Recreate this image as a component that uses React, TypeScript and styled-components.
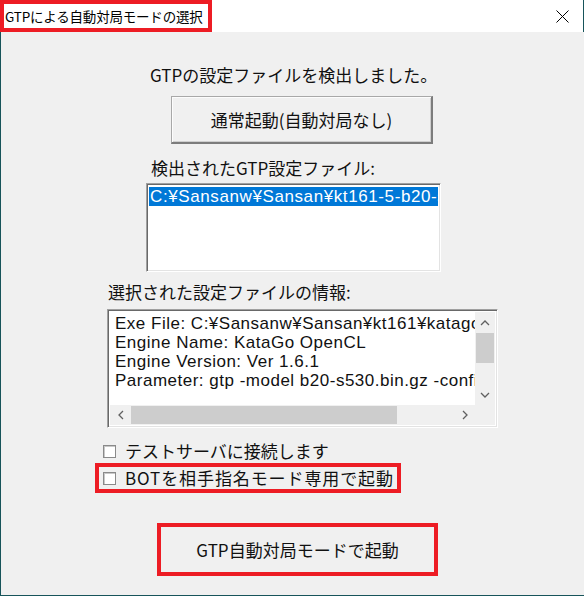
import React from "react";
import styled, { createGlobalStyle } from "styled-components";

const Global = createGlobalStyle`
  html, body { margin: 0; padding: 0; background: #f0f0f0; }
  * { box-sizing: border-box; }
`;

const JP = `"Noto Sans CJK JP", "Liberation Sans", sans-serif`;
const LAT = `"Liberation Sans", "Noto Sans CJK JP", sans-serif`;
const RED = "#ed1c24";
const TEAL = "#17545a";

const Window = styled.div`
  width: 584px;
  height: 596px;
  display: flex;
  flex-direction: column;
  border-left: 1px solid ${TEAL};
  border-bottom: 1px solid ${TEAL};
  background: #f0f0f0;
  font-family: ${JP};
  color: #000;
`;

const TitleBar = styled.div`
  height: 32px;
  flex: none;
  display: flex;
  align-items: stretch;
  justify-content: space-between;
  background: #fff;
  border-right: 1px solid ${TEAL};
  margin-left: -1px;
`;

const Highlight = styled.div<{ $w: number; $h: number }>`
  width: ${(p) => p.$w}px;
  height: ${(p) => p.$h}px;
  border: 4px solid ${RED};
  display: flex;
  align-items: center;
`;

const TitleText = styled.span`
  font-size: 13.5px;
  padding-left: 1px;
  white-space: nowrap;
  letter-spacing: -0.2px;
`;

const CloseBox = styled.div`
  width: 28px;
  display: flex;
  align-items: center;
  justify-content: center;
  margin-right: 7px;
`;

const Body = styled.div`
  flex: 1;
  display: flex;
  flex-direction: column;
  align-items: flex-start;
`;

const Label = styled.div<{ $mt: number; $ml: number }>`
  margin-top: ${(p) => p.$mt}px;
  margin-left: ${(p) => p.$ml}px;
  font-size: 17px;
  line-height: 20px;
  height: 20px;
  white-space: nowrap;
  color: #111;
`;

const Button = styled.div<{ $w: number; $h: number; $flat?: boolean }>`
  width: ${(p) => p.$w}px;
  height: ${(p) => p.$h}px;
  display: flex;
  align-items: center;
  justify-content: center;
  background: #f0f0f0;
  border-top: ${(p) => (p.$flat ? "none" : "1px solid #a8a8a8")};
  border-left: ${(p) => (p.$flat ? "none" : "1px solid #a8a8a8")};
  border-right: ${(p) => (p.$flat ? "none" : "2px solid #7c7c7c")};
  border-bottom: ${(p) => (p.$flat ? "none" : "2px solid #7c7c7c")};
  box-shadow: ${(p) => (p.$flat ? "none" : "inset 1px 1px 0 #fcfcfc, inset -1px -1px 0 #cfcfcf")};
  font-size: 17px;
  color: #111;
  white-space: nowrap;
`;

const Place = styled.div<{ $mt: number; $ml: number }>`
  margin-top: ${(p) => p.$mt}px;
  margin-left: ${(p) => p.$ml}px;
`;

const Sunken = styled.div<{ $w: number; $h: number }>`
  width: ${(p) => p.$w}px;
  height: ${(p) => p.$h}px;
  background: #fff;
  border-top: 1px solid #a0a0a0;
  border-left: 1px solid #a0a0a0;
  border-right: 1px solid #fff;
  border-bottom: 1px solid #fff;
  box-shadow: inset 1px 1px 0 #696969, inset -1px -1px 0 #e3e3e3;
  padding: 2px;
  overflow: hidden;
`;

const SelectedRow = styled.div`
  height: 19px;
  margin-top: 1px;
  background: #0078d7;
  color: #fff;
  font-family: ${LAT};
  font-size: 17px;
  letter-spacing: 0.6px;
  line-height: 19px;
  white-space: nowrap;
  overflow: hidden;
  padding-left: 1px;
`;

const InfoGrid = styled.div`
  display: grid;
  grid-template-columns: 1fr 20px;
  grid-template-rows: 1fr 20px;
  height: 100%;
`;

const InfoText = styled.div`
  padding: 2px 5px;
  font-family: ${LAT};
  font-size: 17px;
  letter-spacing: 0.5px;
  line-height: 19px;
  white-space: nowrap;
  overflow: hidden;
  color: #111;
`;

const VBar = styled.div`
  background: #f0f0f0;
  display: grid;
  grid-template-rows: 21px 30px 1fr 21px;
`;

const HBar = styled.div`
  background: #f0f0f0;
  display: grid;
  grid-template-columns: 21px 266px 1fr 21px;
`;

const Corner = styled.div`
  background: #f0f0f0;
`;

const Arrow = styled.div`
  display: flex;
  align-items: center;
  justify-content: center;
`;

const Thumb = styled.div<{ $v?: boolean }>`
  background: #cdcdcd;
  margin: ${(p) => (p.$v ? "0 1px 0 1px" : "1px 0 1px 0")};
`;

const CheckRow = styled.div<{ $ls?: number }>`
  display: flex;
  align-items: center;
  gap: 9px;
  font-size: 17px;
  line-height: 20px;
  letter-spacing: ${(p) => p.$ls ?? 0}px;
  color: #111;
  white-space: nowrap;
`;

const Box = styled.span`
  width: 13px;
  height: 13px;
  flex: none;
  background: #fff;
  border: 1px solid #8a8a8a;
  box-shadow: inset 1px 1px 0 #c8c8c8;
`;

const Chevron = ({ d }: { d: string }) => (
  <svg width="10" height="10" viewBox="0 0 10 10">
    <path d={d} fill="none" stroke="#606060" strokeWidth="1.3" />
  </svg>
);

export default function App() {
  return (
    <>
      <Global />
      <Window>
        <TitleBar>
          <Highlight $w={212} $h={32}>
            <TitleText>GTPによる自動対局モードの選択</TitleText>
          </Highlight>
          <CloseBox>
            <svg width="13" height="13" viewBox="0 0 13 13">
              <path d="M0.5 0.5 L12.5 12.5 M12.5 0.5 L0.5 12.5" stroke="#000" strokeWidth="1" />
            </svg>
          </CloseBox>
        </TitleBar>
        <Body>
          <Label $mt={33} $ml={149}>GTPの設定ファイルを検出しました。</Label>
          <Place $mt={11} $ml={170}>
            <Button $w={262} $h={48}>通常起動(自動対局なし)</Button>
          </Place>
          <Label $mt={14} $ml={150}>検出されたGTP設定ファイル:</Label>
          <Place $mt={5} $ml={145}>
            <Sunken $w={295} $h={89}>
              <SelectedRow>C:¥Sansanw¥Sansan¥kt161-5-b20-s530-gtp.cfg</SelectedRow>
            </Sunken>
          </Place>
          <Label $mt={10} $ml={107}>選択された設定ファイルの情報:</Label>
          <Place $mt={7} $ml={106}>
            <Sunken $w={391} $h={119}>
              <InfoGrid>
                <InfoText>
                  <div>Exe File: C:¥Sansanw¥Sansan¥kt161¥katago.exe</div>
                  <div>Engine Name: KataGo OpenCL</div>
                  <div>Engine Version: Ver 1.6.1</div>
                  <div>Parameter: gtp -model b20-s530.bin.gz -config gtp.cfg</div>
                </InfoText>
                <VBar>
                  <Arrow><Chevron d="M1 7 L5 3 L9 7" /></Arrow>
                  <Thumb $v />
                  <div />
                  <Arrow><Chevron d="M1 3 L5 7 L9 3" /></Arrow>
                </VBar>
                <HBar>
                  <Arrow><Chevron d="M7 1 L3 5 L7 9" /></Arrow>
                  <Thumb />
                  <div />
                  <Arrow><Chevron d="M3 1 L7 5 L3 9" /></Arrow>
                </HBar>
                <Corner />
              </InfoGrid>
            </Sunken>
          </Place>
          <Place $mt={13} $ml={102}>
            <CheckRow><Box />テストサーバに接続します</CheckRow>
          </Place>
          <Place $mt={2} $ml={94}>
            <Highlight $w={306} $h={30} style={{ paddingLeft: 4 }}>
              <CheckRow $ls={0.9}><Box />BOTを相手指名モード専用で起動</CheckRow>
            </Highlight>
          </Place>
          <Place $mt={30} $ml={156}>
            <Highlight $w={281} $h={53}>
              <Button $w={273} $h={45} $flat>GTP自動対局モードで起動</Button>
            </Highlight>
          </Place>
        </Body>
      </Window>
    </>
  );
}
